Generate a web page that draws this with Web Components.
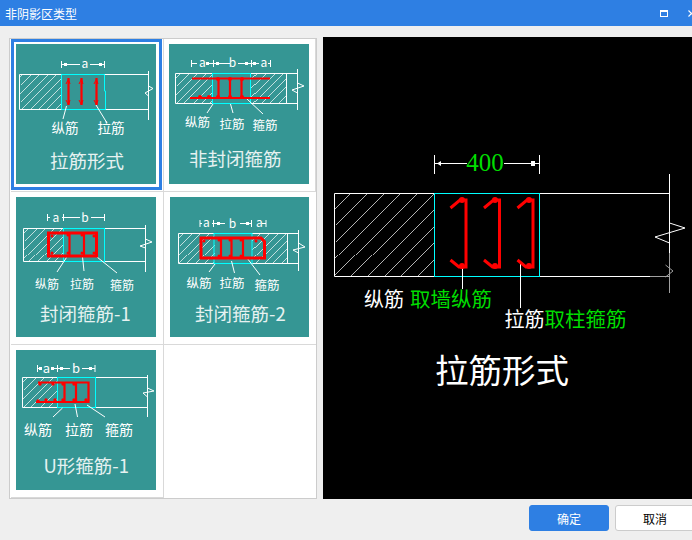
<!DOCTYPE html>
<html lang="zh">
<head>
<meta charset="utf-8">
<title>非阴影区类型</title>
<style>
    html, body { margin: 0; height: 100%; overflow: hidden; background: #efefef; }
    body { font-family: "Noto Sans CJK SC", "Liberation Sans", sans-serif; }
</style>
</head>
<body>
<shade-dialog heading="非阴影区类型">
    <thumb-list slot="list">
        <thumb-cell selected><rebar-thumb kind="lajin"></rebar-thumb></thumb-cell>
        <thumb-cell><rebar-thumb kind="open"></rebar-thumb></thumb-cell>
        <thumb-cell><rebar-thumb kind="closed1"></rebar-thumb></thumb-cell>
        <thumb-cell last><rebar-thumb kind="closed2" narrow></rebar-thumb></thumb-cell>
        <thumb-cell><rebar-thumb kind="u1"></rebar-thumb></thumb-cell>
        <thumb-cell empty last></thumb-cell>
    </thumb-list>
    <rebar-preview slot="preview"></rebar-preview>
    <dialog-button slot="footer" primary>确定</dialog-button>
    <dialog-button slot="footer">取消</dialog-button>
</shade-dialog>

<script>
const TEAL = '#359694';

class ShadeDialog extends HTMLElement {
    constructor() {
        super();
        this.attachShadow({ mode: 'open' });
        this.shadowRoot.innerHTML = `
            <style>
                :host { display: flex; flex-direction: column; width: 695px; height: 540px; background: #efefef; color: #000; }
                header { flex: none; height: 26px; background: #2e7fe3; color: #fff; display: flex; align-items: center; padding-left: 5px; font-size: 12px; }
                header span { flex: 1; }
                header svg { display: block; flex: none; }
                main { flex: none; display: flex; gap: 6px; height: 462px; margin-top: 11px; padding-left: 9px; }
                footer { flex: 1; display: flex; justify-content: flex-end; gap: 6px; padding-top: 6px; }
            </style>
            <header>
                <span></span>
                <svg width="8" height="7" viewBox="0 0 8 7" style="margin-right:20px"><rect x=".5" y=".5" width="7" height="6" fill="none" stroke="#fff"/><rect x="0" y="0" width="8" height="2" fill="#fff"/></svg>
                <svg width="7" height="7" viewBox="0 0 7 7"><path d="M.5 .5 6.5 6.5M6.5 .5 .5 6.5" stroke="#fff" stroke-width="1.2"/></svg>
            </header>
            <main>
                <slot name="list"></slot>
                <slot name="preview"></slot>
            </main>
            <footer><slot name="footer"></slot></footer>
        `;
    }

    connectedCallback() {
        this.shadowRoot.querySelector('header span').textContent = this.getAttribute('heading');
    }
}

class ThumbList extends HTMLElement {
    constructor() {
        super();
        this.attachShadow({ mode: 'open' });
        this.shadowRoot.innerHTML = `
            <style>
                :host { display: block; box-sizing: border-box; width: 308px; height: 461px; margin-top: 1px; background: #fff; border: 1px solid #ccc; padding-left: 1px; }
                div { display: grid; grid-template-columns: 153px 152px; grid-auto-rows: 153px; }
            </style>
            <div><slot></slot></div>
        `;
    }
}

class ThumbCell extends HTMLElement {
    constructor() {
        super();
        this.attachShadow({ mode: 'open' });
        this.shadowRoot.innerHTML = `
            <style>
                :host { display: block; box-sizing: border-box; padding: 0 1px 1px 0; border-right: 1px solid #d9d9d9; border-bottom: 1px solid #d9d9d9; }
                :host([last]) { border-right: none; padding-right: 0; }
                :host([empty]) { border-bottom: none; }
                div { box-sizing: border-box; height: 100%; border: 3px solid transparent; padding: 2px; }
                :host([selected]) div { border-color: #2e7fe3; }
            </style>
            <div><slot></slot></div>
        `;
    }
}

// 45 degree section hatch, lines x+y=c cut to the box by hand
const hatch = (x, y, w, h, step, first) => {
    let d = '';
    for (let c = first; c < x + y + w + h; c += step) {
        if (c <= x + y) continue;
        const x1 = Math.max(x, c - y - h), y1 = c - x1;
        const x2 = Math.min(x + w, c - y), y2 = c - x2;
        d += `M${x1} ${y1}L${x2} ${y2}`;
    }
    return `<path class="h" d="${d}"/>`;
};

const label = (text, x, y, size) => `<text x="${x}" y="${y}" font-size="${size}">${text}</text>`;
const dots = (list, r) => list.map(p => `<circle cx="${p[0]}" cy="${p[1]}" r="${r}" fill="#f00" stroke="none"/>`).join('');

// page coordinates are used in the drawings, read straight from the screenshot
const THUMBS = {
    lajin: {
        box: '16 44 140 140',
        caption: ['拉筋形式', 50, 167.5],
        art: `
            ${hatch(19.5, 74.5, 42, 35, 8.6, 96)}
            <path class="w" d="M19.5 74.5H148.5M19.5 109.5H148.5M19.5 74.5V109.5M148.5 71V120M148.5 86 153 88.5 145 93 148.5 96"/>
            <path class="c" d="M61.5 74.5H104.5V91H105.5V109.5H61.5Z"/>
            <path class="w" d="M61.5 61V68M104.5 61V68M61.5 64.5H80M90 64.5H104.5M66.5 106 63 119M96 105 107 123"/>
            <rect x="64" y="63" width="3" height="3" fill="#fff"/><rect x="99" y="63" width="3" height="3" fill="#fff"/>
            <text x="85" y="68" font-size="12" text-anchor="middle">a</text>
            <path class="r" d="M68.5 78V105M81.5 78V105M96.5 78V105"/>
            <path class="r1" d="M66 84 68.5 79 70 84M66 100 68.5 105 70 100M79 84 81.5 79 83 84M79 100 81.5 105 83 100M94 84 96.5 79 98 84M94 100 96.5 105 98 100"/>
            ${label('纵筋', 51.5, 133, 13.5)}${label('拉筋', 97.5, 133, 13.5)}`
    },
    open: {
        box: '169 44 140 140',
        caption: ['非封闭箍筋', 189, 165.5],
        art: `
            ${hatch(175.5, 73.5, 37, 30, 8.6, 253)}
            ${hatch(251, 73.5, 36, 30, 8.6, 253)}
            <path class="w" d="M175.5 73.5H297.5M175.5 103.5H297.5M175.5 73.5V103.5M286.5 73.5V103.5M297.5 69V110M297.5 83 304 86 292 90 297.5 93"/>
            <rect class="c" x="212.5" y="73.5" width="38" height="30"/>
            <path class="w" d="M191.5 60V67M213.5 60V67M251.5 60V67M270.5 60V67M191.5 63.5H197M208 63.5H230M238 63.5H259M268 63.5H270.5M213 104 207 113M230.5 104 233 113M247 99 263 114"/>
            <rect x="206" y="62" width="3" height="3" fill="#fff"/><rect x="216" y="62" width="3" height="3" fill="#fff"/>
            <rect x="245" y="62" width="3" height="3" fill="#fff"/><rect x="253" y="62" width="3" height="3" fill="#fff"/>
            <text x="202.5" y="67" font-size="12" text-anchor="middle">a</text><text x="232.5" y="67" font-size="12" text-anchor="middle">b</text><text x="264" y="67" font-size="12" text-anchor="middle">a</text>
            <path class="r" d="M192 78.5H270M190 98H270M218.5 78V98M230 78V98M241.5 78V98"/>
            ${dots([[218, 79], [230, 79], [242, 79], [200, 97], [209, 97], [218, 97], [230, 97], [242, 97]], 2)}
            ${label('纵筋', 185, 127, 12.5)}${label('拉筋', 219.5, 129, 12.5)}${label('箍筋', 252.5, 129.5, 12.5)}`
    },
    closed1: {
        box: '16 197 140 140',
        caption: ['封闭箍筋-1', 40, 320.5],
        art: `
            ${hatch(23.5, 228.5, 40, 33, 8.6, 256)}
            <path class="w" d="M23.5 228.5H145.5M23.5 261.5H145.5M23.5 228.5V261.5M145.5 225V272M145.5 239 152 242 140 246 145.5 248"/>
            <rect class="c" x="63.5" y="228.5" width="41" height="33"/>
            <path class="w" d="M47.5 214V221M63.5 214V221M104.5 214V221M47.5 217.5H50M62 217.5H80M91 217.5H104.5M66.5 257.5 57 272M82.5 257 84 271M97 257 117 273"/>
            <text x="56" y="221.5" font-size="12" text-anchor="middle">a</text><text x="85" y="222" font-size="12" text-anchor="middle">b</text>
            <rect class="r3" x="48.5" y="233" width="48" height="23"/>
            <path class="r" d="M69.5 233V256M84 233V256"/>
            ${dots([[52, 236], [68, 235], [82, 235], [94, 236], [52, 253], [68, 253], [82, 253], [94, 253]], 1.5)}
            ${label('纵筋', 35, 288.5, 12)}${label('拉筋', 70, 288.5, 12)}${label('箍筋', 110, 290, 12)}`
    },
    closed2: {
        box: '170 197 139 140',
        caption: ['封闭箍筋-2', 195, 320.5],
        art: `
            ${hatch(178.5, 233.5, 36, 30, 8.6, 416)}
            ${hatch(252, 233.5, 36, 30, 8.6, 416)}
            <path class="w" d="M178.5 233.5H298.5M178.5 263.5H298.5M178.5 233.5V263.5M287.5 233.5V263.5M298.5 230V271M298.5 243 305 247 293 250 298.5 253"/>
            <rect class="c" x="214" y="233.5" width="38" height="30"/>
            <path class="w" d="M200 220V227M213.5 220V227M251.5 220V227M266 220V227M200 223.5H202M212 223.5H225M240 223.5H252M262 223.5H266M215 264 209 272M231.5 261 234.5 273M247 258 260 275"/>
            <rect x="217" y="222" width="3" height="3" fill="#fff"/><rect x="246" y="222" width="3" height="3" fill="#fff"/>
            <text x="206.5" y="227" font-size="12" text-anchor="middle">a</text><text x="232.5" y="227.5" font-size="12" text-anchor="middle">b</text><text x="259.5" y="227" font-size="12" text-anchor="middle">a</text>
            <path class="r3" d="M201 238H261L264.5 241.5V258H201Z"/>
            <path class="r" d="M221 238V258M231.5 238V258M243 238V258"/>
            ${dots([[204, 241], [219, 240], [230, 240], [241, 240], [256, 241], [219, 256], [230, 256], [241, 256]], 1.5)}
            ${label('纵筋', 186.5, 287.5, 12.5)}${label('拉筋', 219.5, 287.5, 12.5)}${label('箍筋', 254.5, 289.5, 12.5)}`
    },
    u1: {
        box: '16 350 140 140',
        caption: ['U形箍筋-1', 43.5, 472.5],
        art: `
            ${hatch(22.5, 377.5, 35, 30, 8.6, 404)}
            <path class="w" d="M22.5 377.5H147.5M22.5 407.5H147.5M22.5 377.5V407.5M147.5 375V417M147.5 388 154 391 143 393 147.5 397"/>
            <rect class="c" x="57.5" y="377.5" width="38" height="30"/>
            <path class="w" d="M37.5 365V372M57.5 365V372M95 365V372M37.5 368.5H42M52 368.5H70M82 368.5H95M62.5 408 53 417M75 404 77.5 417M87 405 105 417"/>
            <rect x="39" y="367" width="3" height="3" fill="#fff"/><rect x="51" y="367" width="3" height="3" fill="#fff"/>
            <rect x="60" y="367" width="3" height="3" fill="#fff"/><rect x="89" y="367" width="3" height="3" fill="#fff"/>
            <text x="46.5" y="373" font-size="13" text-anchor="middle">a</text><text x="76" y="373" font-size="13" text-anchor="middle">b</text>
            <path class="r" d="M38 382.5H88.5V402H36M64.5 382V402M76 382V402"/>
            ${dots([[40, 384], [53, 384], [63, 384], [74, 384], [38, 401], [46, 400], [55, 400], [63, 400], [74, 400], [86, 400]], 1.7)}
            ${label('纵筋', 24, 434.5, 14)}${label('拉筋', 65, 434.5, 14)}${label('箍筋', 105, 434.5, 14)}`
    }
};

class RebarThumb extends HTMLElement {
    constructor() {
        super();
        this.attachShadow({ mode: 'open' });
    }

    connectedCallback() {
        const data = THUMBS[this.getAttribute('kind')];
        const cap = data.caption;
        const w = data.box.split(' ')[2];
        this.shadowRoot.innerHTML = `
            <style>
                :host { display: block; width: 140px; height: 140px; }
                :host([narrow]) { margin-left: 1px; width: 139px; }
                svg { display: block; background: ${TEAL}; font-family: "Noto Sans CJK SC", "Liberation Sans", sans-serif; }
                text { fill: #fff; }
                .caption { fill: #e6f2f1; }
                .h { fill: none; stroke: #fff; stroke-width: .7; shape-rendering: crispEdges; }
                .w { fill: none; stroke: #fff; stroke-width: 1; }
                .c { fill: none; stroke: #0ff; stroke-width: 1; }
                .r { fill: none; stroke: #f00; stroke-width: 2.2; }
                .r1 { fill: none; stroke: #f00; stroke-width: 1; }
                .r3 { fill: none; stroke: #f00; stroke-width: 3; }
            </style>
            <svg width="${w}" height="140" viewBox="${data.box}">
                ${data.art}
                <text class="caption" x="${cap[1]}" y="${cap[2]}" font-size="18.5">${cap[0]}</text>
            </svg>
        `;
    }
}

class RebarPreview extends HTMLElement {
    constructor() {
        super();
        this.attachShadow({ mode: 'open' });
        this.shadowRoot.innerHTML = `
            <style>
                :host { display: block; width: 372px; height: 462px; background: #000; }
                svg { display: block; font-family: "Noto Sans CJK SC", "Liberation Sans", sans-serif; }
                text { fill: #fff; }
                .g { fill: #0d0; }
                .h { fill: none; stroke: #fff; stroke-width: .7; shape-rendering: crispEdges; }
                .w { fill: none; stroke: #fff; stroke-width: 1; }
                .c { fill: none; stroke: #0ff; stroke-width: 1; }
                .r { fill: none; stroke: #f00; stroke-width: 3; }
            </style>
            <svg width="372" height="462" viewBox="323 37 372 462">
                ${hatch(334.5, 193.5, 100, 83, 16.8, 543)}
                <path class="w" d="M334.5 193.5H669.5M334.5 276.5H650M334.5 193.5V276.5M669.5 174V253M669.5 223 685 228 655 237 669.5 243"/>
                <path d="M650 276.5H669.5M669.5 253V293M665.5 265 673 271 665.5 277" fill="none" stroke="#a0a0a0"/>
                <rect class="c" x="434.5" y="193.5" width="105" height="83"/>
                <path class="w" d="M434.5 155V174M539.5 155V174M434.5 163.5H467M504 163.5H539.5M462.5 267V289M520.5 263V308"/>
                <path d="M437 163.5 441 161V166ZM535 161V166L531 166V161Z" fill="#fff"/>
                <text class="g" x="485" y="170.5" text-anchor="middle" font-size="25" style="font-family:'Liberation Serif',serif">400</text>
                <path class="r" d="M450.5 208 460 200H466V267H459L450.5 260M484 208 493.5 200H499.5V267H492.5L484 260M517.5 208 527 200H533V267H526L517.5 260"/>
                ${dots([[462, 200], [462, 266], [495, 200], [495, 266], [529, 200], [529, 266]], 3)}
                <text x="364" y="307" font-size="20">纵筋</text>
                <text class="g" x="410" y="307" font-size="20.5">取墙纵筋</text>
                <text x="504.5" y="327" font-size="20">拉筋</text>
                <text class="g" x="544.5" y="327" font-size="20.5">取柱箍筋</text>
                <text x="435" y="383" font-size="33.5">拉筋形式</text>
            </svg>
        `;
    }
}

class DialogButton extends HTMLElement {
    constructor() {
        super();
        this.attachShadow({ mode: 'open' });
        this.shadowRoot.innerHTML = `
            <style>
                :host { display: flex; align-items: center; justify-content: center; box-sizing: border-box; width: 80px; height: 26px; border: 1px solid #ccc; border-radius: 3px; background: #fff; color: #000; font-size: 12px; }
                :host([primary]) { background: #2e7fe3; border-color: #2e7fe3; color: #fff; }
            </style>
            <slot></slot>
        `;
    }
}

customElements.define('shade-dialog', ShadeDialog);
customElements.define('thumb-list', ThumbList);
customElements.define('thumb-cell', ThumbCell);
customElements.define('rebar-thumb', RebarThumb);
customElements.define('rebar-preview', RebarPreview);
customElements.define('dialog-button', DialogButton);
</script>
</body>
</html>
